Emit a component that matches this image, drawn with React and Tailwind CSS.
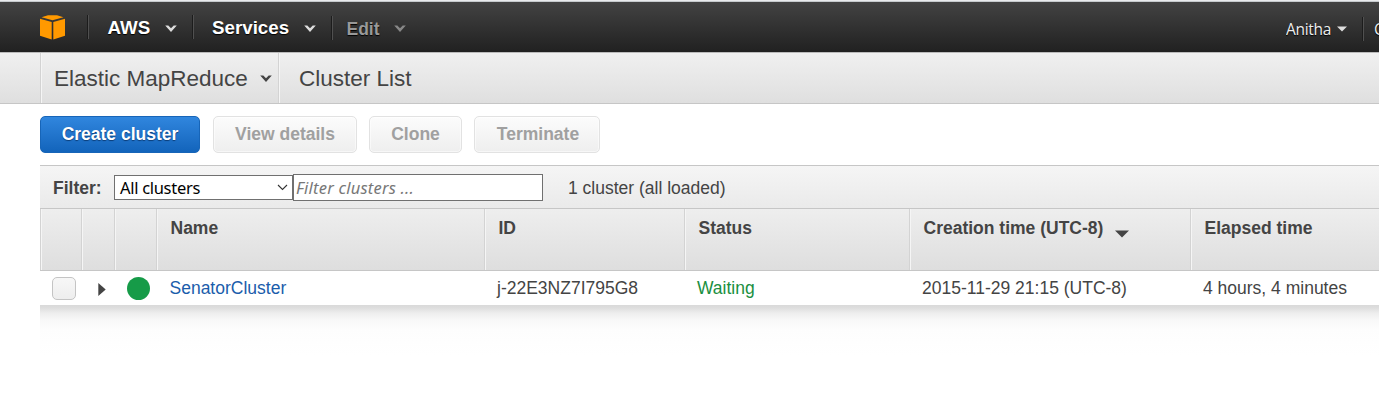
function Chevron({ className, width = 12, height = 8 }) {
  return (
    <svg className={className} width={width} height={height} viewBox="0 0 12 8">
      <path d="M0.2 0.6H3.3L6 3.2 8.7 0.6H11.8L6 7Z" fill="currentColor" />
    </svg>
  );
}

function NavDivider() {
  return <span className="block h-6 w-0.5 shrink-0 border-l border-[#1c1c1c] bg-[#505050]" />;
}

function NavBar() {
  return (
    <header className="flex h-[52px] shrink-0 flex-col">
      <div className="h-0.5 shrink-0 border-b border-[#c6cacd] bg-[#e9ebed]" />
      <nav className="flex h-[50px] bg-linear-to-b from-[#434343] to-[#212121] text-white [text-shadow:0_1px_1px_#000]">
        <div className="flex w-[87px] shrink-0 pt-[12px] pl-10">
          <svg width="25" height="26" viewBox="0 0 25 26">
            <path d="M1.5 3.2 8 1.2H17L23.5 3.2 12.5 6.2Z" fill="#f90" />
            <path d="M0 4.7 11.7 8.1V25.5L0 21.8Z" fill="#f90" />
            <path d="M25 4.7 13.3 8.1V25.5L25 21.8Z" fill="#f90" />
          </svg>
        </div>
        <div className="pt-[13px]"><NavDivider /></div>
        <div className="flex w-[103px] shrink-0 pt-[14px] pl-[18.5px] text-[18.75px] leading-6 font-bold">
          <span className="w-[57.5px]">AWS</span>
          <Chevron className="mt-[9px] text-[#ddd]" />
        </div>
        <div className="pt-[13px]"><NavDivider /></div>
        <div className="flex w-[137px] shrink-0 pt-[14px] pl-[18px] text-[18.75px] leading-6 font-bold">
          <span className="w-[92px]">Services</span>
          <Chevron className="mt-[9px] text-[#ddd]" />
        </div>
        <div className="pt-[14px]"><NavDivider /></div>
        <div className="flex pt-[15px] pl-[13.5px] text-[17.5px] leading-6 font-bold text-[#999]">
          <span className="w-[47.5px]">Edit</span>
          <Chevron className="mt-[8px] text-[#888]" />
        </div>
        <div className="ml-auto flex w-[93px] overflow-hidden pt-[15px] font-['Open_Sans','Noto_Sans',sans-serif] text-[15.5px] leading-6 text-[#eee]">
          <span className="w-[51px] shrink-0 tracking-[-0.3px]">Anitha</span>
          <svg className="mt-[9px] mr-[15px] shrink-0" width="10" height="6" viewBox="0 0 10 6">
            <path d="M0 0.5H10L5 5.5Z" fill="#ddd" />
          </svg>
          <NavDivider />
          <span className="pl-[10px]">C</span>
        </div>
      </nav>
    </header>
  );
}

function Separator() {
  return <span className="w-0.5 shrink-0 border-l border-[#d3d3d3] bg-[#f5f5f5]" />;
}

function ServiceBar() {
  return (
    <div className="flex h-[52px] shrink-0 border-y border-t-[#bbb] border-b-[#c6c6c6] bg-linear-to-b from-[#f0f0f0] to-[#dfdfdf] pl-10 text-[22.5px] leading-[51px]">
      <Separator />
      <div className="flex w-[236px] pl-3">
        <span className="w-[206px]">Elastic MapReduce</span>
        <Chevron className="mt-[22px]" />
      </div>
      <Separator />
      <span className="pl-[19px]">Cluster List</span>
    </div>
  );
}

function Toolbar() {
  const disabled =
    "rounded-[5px] border border-[#e2e2e2] bg-linear-to-b from-[#fcfcfc] to-[#eee] text-[#a0a0a0] shadow-[inset_0_0_0_1px_#fff8]";
  return (
    <div className="flex h-[61px] shrink-0 pt-3 pl-10 text-[17.5px] leading-[34px] font-bold">
      <button className="h-[37px] w-[160px] rounded-[5px] border border-[#1765b8] bg-linear-to-b from-[#3086de] to-[#1264bb] pb-0.5 text-white [text-shadow:0_1px_1px_#0b3d78]">
        Create cluster
      </button>
      <button className={`ml-[13px] h-[37px] w-[144px] pb-0.5 ${disabled}`}>View details</button>
      <button className={`ml-3 h-[37px] w-[93px] pb-0.5 ${disabled}`}>Clone</button>
      <button className={`ml-3 h-[37px] w-[126px] pb-0.5 pl-0.5 ${disabled}`}>Terminate</button>
    </div>
  );
}

function FilterBar() {
  return (
    <div className="flex h-[43px] border-t border-[#c6c6c6] bg-linear-to-b from-[#f5f5f5] to-[#eaeaea] text-[17.5px]">
      <span className="w-[74px] pl-[13px] leading-[45px] font-bold">Filter:</span>
      <div className="mt-[9px] flex h-[25px] w-[179px] items-center border border-[#707070] bg-white pl-[5px] font-['Noto_Sans',sans-serif] text-[16.5px] text-black">
        <span className="w-[157px] pt-0.5 tracking-[-0.3px]">All clusters</span>
        <svg width="11" height="7" viewBox="0 0 11 7">
          <path d="M1 1 5.5 5.5 10 1" fill="none" stroke="#333" strokeWidth="1.1" />
        </svg>
      </div>
      <input
        className="mt-2 h-[27px] w-[250px] border border-[#707070] bg-white pl-0.5 font-['Noto_Sans',sans-serif] text-[16.5px] tracking-[0.22px] italic placeholder:text-[#777]"
        placeholder="Filter clusters ..."
      />
      <span className="pl-[25px] leading-[45px]">1 cluster (all loaded)</span>
    </div>
  );
}

const columns = "grid grid-cols-[41px_33px_42px_328px_200px_225px_281px_1fr]";

function HeaderCell({ children }) {
  return (
    <div className="flex overflow-hidden whitespace-nowrap">
      <Separator />
      <div className="flex pl-[12.5px] leading-[38px]">{children}</div>
    </div>
  );
}

function ClusterTable() {
  return (
    <div className="ml-10">
      <FilterBar />
      <div className={`${columns} h-[63px] border-y border-[#c6c6c6] bg-linear-to-b from-[#eee] to-[#dedede] text-[17.5px] font-bold`}>
        <HeaderCell />
        <HeaderCell />
        <HeaderCell />
        <HeaderCell>Name</HeaderCell>
        <HeaderCell>ID</HeaderCell>
        <HeaderCell>Status</HeaderCell>
        <HeaderCell>
          Creation time (UTC-8)
          <svg className="mt-[21px] ml-3" width="14" height="8" viewBox="0 0 14 8">
            <path d="M0 0.5H14L7 7.5Z" fill="currentColor" />
          </svg>
        </HeaderCell>
        <HeaderCell>Elapsed time</HeaderCell>
      </div>
      <div className={`${columns} h-[34px] text-[17.5px] leading-[34px] whitespace-nowrap`}>
        <div className="pt-1.5 pl-3">
          <div className="h-[23px] w-6 rounded-[5px] border border-[#c4c4c4] bg-linear-to-b from-[#f7f7f7] to-[#eee]" />
        </div>
        <div className="pt-3 pl-[17px]">
          <svg width="8" height="13" viewBox="0 0 8 14">
            <path d="M0 0 8 7 0 14Z" fill="currentColor" />
          </svg>
        </div>
        <div className="pt-1.5 pl-[13px]">
          <div className="size-[23px] rounded-full bg-[#169b48]" />
        </div>
        <a className="pl-[13.5px] text-[#1b5dab]">SenatorCluster</a>
        <span className="pl-[13px]">j-22E3NZ7I795G8</span>
        <span className="pl-[13px] text-[#1a8f41]">Waiting</span>
        <span className="pl-[13px]">2015-11-29 21:15 (UTC-8)</span>
        <span className="pl-[13px]">4 hours, 4 minutes</span>
      </div>
      <div className="h-[50px] bg-[linear-gradient(to_bottom,#d9d9d9_0,#dedede_3px,#ededed_8px,#f8f8f8_15px,#fdfdfd_24px,#fff_50px)]" />
    </div>
  );
}

export default function App() {
  return (
    <div className="flex h-[411px] w-[1379px] flex-col overflow-hidden bg-white font-['Liberation_Sans',Arial,sans-serif] text-[#444]">
      <NavBar />
      <ServiceBar />
      <Toolbar />
      <ClusterTable />
    </div>
  );
}
